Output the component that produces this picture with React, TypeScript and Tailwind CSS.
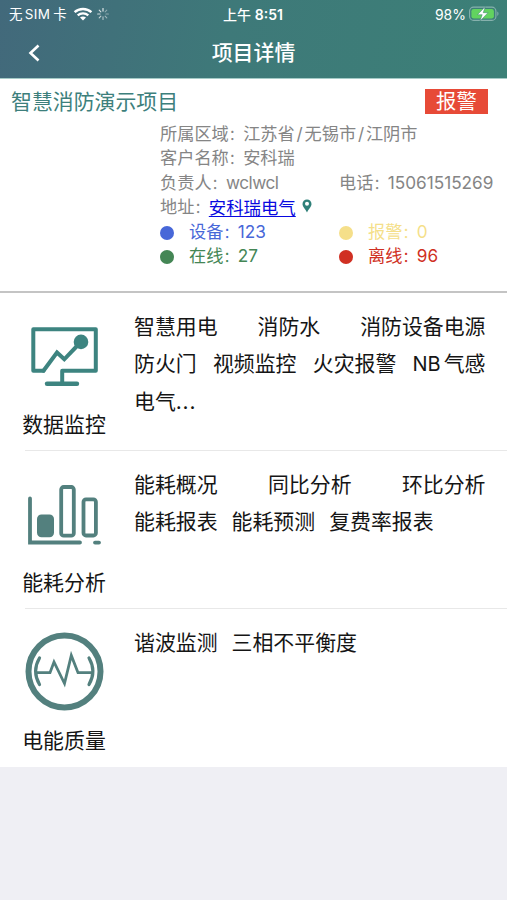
import type { ReactNode } from 'react';

function Colon() {
  return <span className="text-[14.4px]">：</span>;
}

function WifiIcon() {
  return (
    <svg width="20" height="14" viewBox="0 0 20 14" fill="none" stroke="#fff">
      <path d="M1.6 5.2C6.2.9 13.8.9 18.4 5.2" strokeWidth="2.4" />
      <path d="M4.7 8.4c3-2.7 7.6-2.7 10.600 0" strokeWidth="2.3" />
      <path d="M10 13.500 7 10.500c1.700-1.500 4.300-1.500 6 0z" fill="#fff" stroke="none" />
    </svg>
  );
}

function SpinnerIcon() {
  return (
    <svg width="12" height="12" viewBox="0 0 12 12" stroke="#fff" strokeWidth="1.1" strokeLinecap="round">
      <path d="M6 .6v2.500" opacity=".9" />
      <path d="m9.800 2.200-1.700 1.700" opacity=".4" />
      <path d="M11.400 6H8.900" opacity=".4" />
      <path d="M9.800 9.800 8.100 8.100" opacity=".5" />
      <path d="M6 11.400V8.900" opacity=".6" />
      <path d="m2.200 9.800 1.700-1.700" opacity=".7" />
      <path d="M.6 6h2.500" opacity=".75" />
      <path d="m2.200 2.200 1.700 1.700" opacity=".8" />
    </svg>
  );
}

function BatteryIcon() {
  return (
    <svg width="31" height="16" viewBox="0 0 31 16">
      <rect x=".6" y="1.100" width="26.300" height="13.300" rx="4" fill="none" stroke="#86b1ad" strokeWidth="1.100" />
      <path d="M28.300 5.600c1.600.600 1.600 3.700 0 4.300z" fill="#86b1ad" />
      <rect x="2.400" y="2.900" width="22.500" height="9.700" rx="2.400" fill="#62d35f" />
      <path d="M16.300.6 8.500 8.700h4.700l-2.200 6.400 8-8.400h-4.800z" fill="#fff" stroke="#3c8077" strokeWidth=".5" />
    </svg>
  );
}

function PinIcon() {
  return (
    <svg width="10" height="14" viewBox="0 0 10 14">
      <path
        d="M5 .5C2.400.5.500 2.400.5 4.900.5 7.700 3.400 9.800 5 13.500 6.600 9.800 9.500 7.700 9.500 4.900 9.500 2.400 7.600.5 5 .5Zm0 2.300a2 2 0 1 1 0 4 2 2 0 0 1 0-4Z"
        fill="#2f8079"
        fillRule="evenodd"
      />
    </svg>
  );
}

function MonitorIcon() {
  return (
    <svg width="80" height="80" viewBox="0 -8 80 80" fill="none" stroke="#3d8480" strokeWidth="4" strokeLinejoin="round" strokeLinecap="round">
      <path d="M19.500 46.700H9.300V5.300H71.800V46.700H38.200V58" />
      <path d="M23 59.700H53" strokeWidth="4.400" />
      <path d="M19.500 46.700 33 28.500 40.300 35.300 53 22" strokeLinejoin="miter" />
      <circle cx="57" cy="17.900" r="7.300" fill="#3d8480" stroke="none" />
    </svg>
  );
}

function BarsIcon() {
  return (
    <svg width="80" height="80" viewBox="0 -9 80 80" fill="none" stroke="#53807e" strokeWidth="3.800" strokeLinecap="round">
      <path d="M6 15.500V59.500H56" strokeLinejoin="miter" />
      <path d="M71 59.600H75" />
      <rect x="13" y="31.500" width="17" height="22.800" rx="4.500" fill="#53807e" stroke="none" />
      <rect x="37.200" y="4" width="12.600" height="48.700" rx="2.500" />
      <rect x="59.500" y="16.300" width="12.400" height="36.200" rx="2.500" />
    </svg>
  );
}

function WaveIcon() {
  return (
    <svg width="80" height="80" viewBox="0 0 80 80" fill="none" stroke="#53807e" strokeLinecap="round">
      <circle cx="40.500" cy="39.500" r="36" strokeWidth="6" />
      <path d="M15.500 26c-5 8.500-5 18 0 26.500M65 26c5 8.500 5 18 0 26.500" strokeWidth="3.200" />
      <path d="M12.500 40.700H26L30 30 40.500 51.500 47.300 23.500 54 40.700H67.500" strokeWidth="2.800" />
    </svg>
  );
}

function Stat({ dot, color, label, value }: { dot: string; color: string; label: string; value: string }) {
  return (
    <div className={`flex items-center ${color}`}>
      <span className={`mr-[15px] size-[14px] rounded-full ${dot}`} />
      <span>
        {label}
        <Colon />
        {value}
      </span>
    </div>
  );
}

function Section({ icon, title, last, children }: { icon: ReactNode; title: string; last?: boolean; children: ReactNode }) {
  return (
    <section className="flex h-[158px] text-[20.9px] leading-[37px] text-[#151515]">
      <div className="ml-[24px] flex w-[80px] flex-col items-center pt-[23px]">
        {icon}
        <h2 className="mt-[10px] whitespace-nowrap leading-[37px]">{title}</h2>
      </div>
      <div className="relative ml-[30px] flex-1 pr-[21.5px] pt-[15px] whitespace-nowrap">
        {children}
        {!last && <div className="absolute bottom-0 -left-[109px] right-0 h-px bg-[#e8e8e8]" />}
      </div>
    </section>
  );
}

export default function App() {
  return (
    <div className="flex h-[900px] w-[507px] flex-col overflow-hidden bg-[#efeff4] font-['Inter','Noto_Sans_CJK_SC',sans-serif]">
      <header className="h-[79px] border-b border-[#a5cbc7] bg-linear-[100deg] from-[#42697b] via-[#3e7979] via-45% to-[#3c8077] text-white">
        <div className="grid h-[28px] grid-cols-3 items-center pl-[9px] pr-[7px] text-[13.5px]">
          <div className="flex items-center">
            <span className="tracking-[0.3px]">无</span>
            <span className="ml-[2px] tracking-[0.3px]">SIM</span>
            <span className="ml-[3px]">卡</span>
            <span className="ml-[6px]"><WifiIcon /></span>
            <span className="ml-[4px]"><SpinnerIcon /></span>
          </div>
          <div className="-ml-[3px] text-center text-[14px] font-medium">上午 <span className="font-semibold">8:51</span></div>
          <div className="flex items-center justify-end gap-[3px]">
            <span className="text-[14px]">98%</span>
            <BatteryIcon />
          </div>
        </div>
        <div className="grid h-[50px] grid-cols-[60px_1fr_60px] items-center">
          <button className="pl-[28px]" aria-label="返回">
            <svg width="12" height="18" viewBox="0 0 12 18" fill="none" stroke="#fff" strokeWidth="2.600">
              <path d="M10.500 1.500 2.500 9l8 7.500" />
            </svg>
          </button>
          <h1 className="text-center text-[20.9px] font-medium">项目详情</h1>
        </div>
      </header>

      <main className="bg-white">
        <div className="h-[214px] border-b-2 border-[#c4c4c4]">
          <div className="flex h-[43px] items-center justify-between pl-[11px] pr-[19px] pt-[2px]">
            <h2 className="text-[20.9px] text-[#3d7f7c]">智慧消防演示项目</h2>
            <span className="flex h-[25px] w-[63px] items-center justify-center bg-[#e74a37] pt-px text-[20.4px] leading-none text-white">报警</span>
          </div>
          <div className="ml-[160px] grid grid-cols-[179px_1fr] auto-rows-[24.6px] items-center whitespace-nowrap text-[17.2px] leading-[24.6px] text-[#858585]">
            <div className="col-span-2">所属区域<Colon />江苏省<span className="mx-[1.8px]">/</span>无锡市<span className="mx-[1.8px]">/</span>江阴市</div>
            <div className="col-span-2">客户名称<Colon />安科瑞</div>
            <div>负责人<Colon /><span className="tracking-[-0.5px]">wclwcl</span></div>
            <div>电话<Colon />15061515269</div>
            <div className="col-span-2 flex items-center">
              <span>地址<Colon /></span>
              <a className="text-[17.400px] text-[#0808e0] underline decoration-1 underline-offset-2">安科瑞电气</a>
              <span className="-mt-[5px] ml-[6px]"><PinIcon /></span>
            </div>
            <Stat dot="bg-[#4767d8]" color="text-[#4767d8]" label="设备" value="123" />
            <Stat dot="bg-[#f5df8a]" color="text-[#f5df8a]" label="报警" value="0" />
            <Stat dot="bg-[#448655]" color="text-[#448655]" label="在线" value="27" />
            <Stat dot="bg-[#d03023]" color="text-[#d03023]" label="离线" value="96" />
          </div>
        </div>

        <Section icon={<MonitorIcon />} title="数据监控">
          <div className="flex justify-between"><span>智慧用电</span><span>消防水</span><span>消防设备电源</span></div>
          <div className="flex justify-between"><span>防火门</span><span>视频监控</span><span>火灾报警</span><span><span className="text-[20px]">NB</span><span className="ml-[3px]">气感</span></span></div>
          <div>电气<span className="tracking-[0.8px]">...</span></div>
        </Section>
        <Section icon={<BarsIcon />} title="能耗分析">
          <div className="flex justify-between"><span>能耗概况</span><span>同比分析</span><span>环比分析</span></div>
          <div className="flex gap-[14px]"><span>能耗报表</span><span>能耗预测</span><span>复费率报表</span></div>
        </Section>
        <Section icon={<WaveIcon />} title="电能质量" last>
          <div className="flex gap-[14px]"><span>谐波监测</span><span>三相不平衡度</span></div>
        </Section>
      </main>
    </div>
  );
}
